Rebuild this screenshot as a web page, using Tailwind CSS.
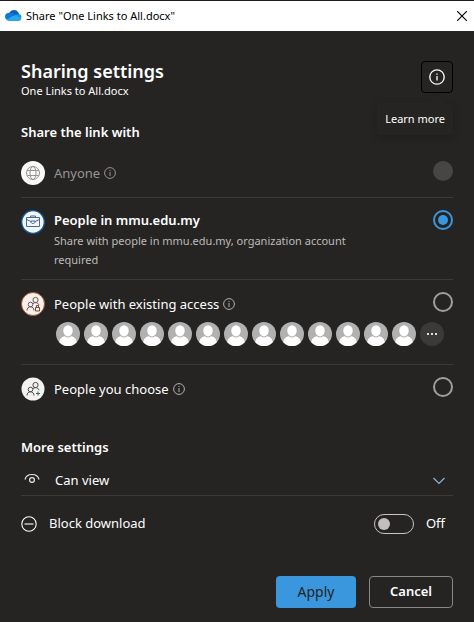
<!DOCTYPE html>
<html lang="en">
<head>
<meta charset="utf-8">
<meta name="viewport" content="width=device-width, initial-scale=1">
<title>Share "One Links to All.docx"</title>
<script src="https://cdn.jsdelivr.net/npm/@tailwindcss/browser@4"></script>
</head>
<body class="flex min-h-screen flex-col bg-[#252423] font-['Noto_Sans','Open_Sans',sans-serif] text-[13px] text-white">
<svg class="hidden" aria-hidden="true">
  <symbol id="info" viewBox="0 0 12 12">
    <circle cx="6" cy="6" r="5.4" fill="none" stroke="currentColor"/>
    <path d="M6 5v4" stroke="currentColor"/><path d="M6 3v1" stroke="currentColor"/>
  </symbol>
  <symbol id="person" viewBox="0 0 24 24">
    <circle cx="12" cy="12" r="12" fill="#b1b1b1"/>
    <path d="M3.2 20.2C3.6 16.6 6 14.600 9 14.200c1.700 1.700 4.300 1.700 6 0 3 .4 5.400 2.400 5.800 6A12 12 0 0 1 3.200 20.200z" fill="#fff"/>
    <ellipse cx="12" cy="8.800" rx="4.700" ry="5.600" fill="#fff"/>
  </symbol>
  <symbol id="people" viewBox="0 0 24 24">
    <g fill="none" stroke="currentColor" stroke-width="1">
      <circle cx="14.500" cy="8" r="2.600"/>
      <circle cx="9.500" cy="12.500" r="2.300"/>
      <path d="M6 18.500c0-2.200 1.400-3.700 3.500-3.700s3.500 1.500 3.500 3.700"/>
      <path d="M12 11.700c.7-.7 1.500-1.100 2.500-1.100 1.800 0 3 1 3.500 2.600"/>
    </g>
  </symbol>
</svg>

<header class="flex h-[31px] items-center border-t border-[#1f1a1f] bg-white pr-[7px] pl-1 text-black">
  <svg class="mr-1 h-4 w-[18px]" viewBox="0 0 18 16" aria-hidden="true">
    <path d="M5 5.500C6 3 8 2 10 2c2.600 0 4.500 1.700 5 4l-4.500 3z" fill="#0f5fb5"/>
    <path d="M4.700 4.800C2.200 5 1 6.800 1 8.600c0 1.600.8 2.800 2 3.400l9-5.200C9.800 5.200 7.500 4.400 4.700 4.800z" fill="#0f78d4"/>
    <path d="M11.500 7c1-.8 2-1.100 3.200-1 1.700.2 2.800 1.700 2.800 3.200L15 11z" fill="#1490df"/>
    <path d="M2.500 11.800 11.500 7l6 3.200c-.2 1.600-1.300 2.800-3 2.800H5c-1 0-1.900-.4-2.500-1.200z" fill="#28a8ea"/>
  </svg>
  <h1 class="flex-1 text-[11px]">Share "One Links to All.docx"</h1>
  <button type="button" aria-label="Close">
    <svg class="size-2.5" viewBox="0 0 10 10" fill="none" stroke="#000" stroke-width="1.100"><path d="M0 0l10 10M10 0L0 10"/></svg>
  </button>
</header>

<main class="flex flex-1 flex-col px-[21px] pt-[30px] pb-[14px]">
  <div class="flex h-8 items-start justify-between">
    <div>
      <h2 class="text-lg leading-5 font-semibold">Sharing settings</h2>
      <p class="text-[11px] leading-5">One Links to All.docx</p>
    </div>
    <div class="relative">
      <button type="button" aria-label="Learn more" aria-describedby="tip" class="flex size-8 items-center justify-center rounded-sm border border-black">
        <svg class="size-4" viewBox="0 0 16 16" fill="none" stroke="currentColor"><circle cx="8" cy="8" r="7.200" stroke-width="1.300"/><path d="M8 7v4.500M8 4.500v1.300" stroke-width="1.300"/></svg>
      </button>
      <div id="tip" role="tooltip" class="absolute top-[42px] right-0 rounded-xs bg-[#252423] p-2 text-[11px] leading-4 whitespace-nowrap shadow-[0_2px_8px_rgba(0,0,0,0.2)]">Learn more
        <svg class="absolute right-1 bottom-full h-2.5 w-6" viewBox="0 0 24 10" aria-hidden="true"><path d="M12 0 22 10H2z" fill="#252423"/><path d="M2 10 12 0l10 10" fill="none" stroke="#222120"/></svg>
      </div>
    </div>
  </div>

  <form class="flex flex-1 flex-col pt-[29px]">
    <fieldset class="min-w-0">
      <legend class="pb-[19px] leading-5 font-semibold">Share the link with</legend>

      <div class="flex items-start gap-[9px] border-b border-[#3b3a39] pb-3">
        <svg class="size-6 shrink-0" viewBox="0 0 24 24" aria-hidden="true"><circle cx="12" cy="12" r="12" fill="#faf9f8"/><g fill="none" stroke="#979593"><circle cx="12" cy="12" r="6.500"/><ellipse cx="12" cy="12" rx="3" ry="6.500"/><path d="M6.200 9.500h11.600M6.200 14.500h11.600"/></g></svg>
        <label for="anyone" class="flex flex-1 items-center gap-1 leading-6 text-[#979593]">Anyone <svg class="size-3"><use href="#info"/></svg></label>
        <input id="anyone" name="scope" type="radio" disabled class="size-5 appearance-none rounded-full bg-[#484644]">
      </div>

      <div class="flex items-start gap-[9px] border-b border-[#3b3a39] pt-3 pb-2.5">
        <svg class="size-6 shrink-0" viewBox="0 0 24 24" aria-hidden="true"><circle cx="12" cy="12" r="11.300" fill="#eff6fc" stroke="#0f5a9c" stroke-width="1.300"/><g fill="none" stroke="#3f5a86" stroke-width=".9"><path d="M5.500 7.500h13v9h-13zM9.500 7.500V6h5v1.500M5.500 9.500l4.500 2M14 11.500l4.500-2"/><path d="M10 11h4v1c0 2-4 2-4 0z"/></g></svg>
        <div class="min-w-0 flex-1">
          <label for="org" class="block leading-[21px] font-semibold">People in mmu.edu.my</label>
          <p class="max-w-[310px] text-[11px] leading-[19px] text-[#bebbb8]">Share with people in mmu.edu.my, organization account required</p>
        </div>
        <input id="org" name="scope" type="radio" checked class="flex size-5 appearance-none items-center justify-center rounded-full border-2 border-[#3a96dd] before:size-2.5 before:rounded-full before:bg-[#3a96dd]">
      </div>

      <div class="flex items-start gap-[9px] border-b border-[#3b3a39] pt-3 pb-[18px]">
        <svg class="size-6 shrink-0 text-[#6b5a52]" viewBox="0 0 24 24" aria-hidden="true"><circle cx="12" cy="12" r="11.500" fill="#f8f0ec" stroke="#a3562b"/><use href="#people"/><path d="M14.500 15.500h4v3.500h-4zM15.500 15.500v-2h2v2" fill="none" stroke="#7a4a3a"/></svg>
        <div class="min-w-0 flex-1">
          <label for="existing" class="flex items-center gap-1 leading-6">People with existing access <svg class="size-3 text-[#b3b0ad]"><use href="#info"/></svg></label>
          <div class="mt-1.5 ml-0.5 flex gap-1">
            <svg class="size-6 shrink-0"><use href="#person"/></svg>
            <svg class="size-6 shrink-0"><use href="#person"/></svg>
            <svg class="size-6 shrink-0"><use href="#person"/></svg>
            <svg class="size-6 shrink-0"><use href="#person"/></svg>
            <svg class="size-6 shrink-0"><use href="#person"/></svg>
            <svg class="size-6 shrink-0"><use href="#person"/></svg>
            <svg class="size-6 shrink-0"><use href="#person"/></svg>
            <svg class="size-6 shrink-0"><use href="#person"/></svg>
            <svg class="size-6 shrink-0"><use href="#person"/></svg>
            <svg class="size-6 shrink-0"><use href="#person"/></svg>
            <svg class="size-6 shrink-0"><use href="#person"/></svg>
            <svg class="size-6 shrink-0"><use href="#person"/></svg>
            <svg class="size-6 shrink-0"><use href="#person"/></svg>
            <button type="button" aria-label="More people" class="flex size-6 shrink-0 items-center justify-center rounded-full bg-[#3b3a39]">
              <svg class="h-0.5 w-2.5" viewBox="0 0 10 2" fill="#e1dfdd"><path d="M0 0h2v2H0zM4 0h2v2H4zM8 0h2v2H8z"/></svg>
            </button>
          </div>
        </div>
        <input id="existing" name="scope" type="radio" class="size-5 appearance-none rounded-full border-2 border-[#a19f9d]">
      </div>

      <div class="flex items-start gap-[9px] pt-3">
        <svg class="size-6 shrink-0 text-[#4f4d4b]" viewBox="0 0 24 24" aria-hidden="true"><circle cx="12" cy="12" r="11.500" fill="#f3f2f1"/><use href="#people"/><path d="M17 14.500v4M15 16.500h4" stroke="#2f6470"/></svg>
        <label for="choose" class="flex flex-1 items-center gap-1 leading-6">People you choose <svg class="size-3 text-[#b3b0ad]"><use href="#info"/></svg></label>
        <input id="choose" name="scope" type="radio" class="size-5 appearance-none rounded-full border-2 border-[#a19f9d]">
      </div>
    </fieldset>

    <h3 class="mt-9 mb-2.5 leading-5 font-semibold">More settings</h3>
    <div class="relative flex items-center border-b border-[#3b3a39]">
      <svg class="ml-[3px] size-4" viewBox="0 0 16 16" fill="none" stroke="#e8e6e4" stroke-width="1.200" aria-hidden="true"><path d="M1 6.500C1.800 3.200 4.500 1.500 8 1.500s6.200 1.700 7 5"/><circle cx="8" cy="7" r="2.400"/></svg>
      <select aria-label="Permission" class="h-7 flex-1 appearance-none bg-transparent pl-[15px]"><option>Can view</option><option>Can edit</option></select>
      <svg class="pointer-events-none absolute right-2 h-2 w-3" viewBox="0 0 12 8" fill="none" stroke="#8ab4d8" stroke-width="1.200" aria-hidden="true"><path d="M.5 1 6 6.500 11.500 1"/></svg>
    </div>
    <div class="mt-[18px] flex h-5 items-center">
      <svg class="size-4" viewBox="0 0 16 16" fill="none" stroke="#fff" stroke-width="1.100" aria-hidden="true"><circle cx="8" cy="8" r="7.200"/><path d="M3.500 8h9"/></svg>
      <label for="block" class="ml-3 flex-1">Block download</label>
      <input id="block" type="checkbox" role="switch" class="flex h-5 w-10 appearance-none items-center rounded-full border border-[#c8c6c4] px-[3px] before:size-3 before:rounded-full before:bg-[#c2bfbc]">
      <span class="mr-2 ml-3">Off</span>
    </div>

    <div class="mt-auto flex justify-end gap-[13px]">
      <button type="submit" class="h-8 w-20 rounded-sm bg-[#3a96dd] text-sm text-[#252423]">Apply</button>
      <button type="button" class="h-8 w-[84px] rounded-sm border border-[#8a8886] font-semibold">Cancel</button>
    </div>
  </form>
</main>
</body>
</html>
